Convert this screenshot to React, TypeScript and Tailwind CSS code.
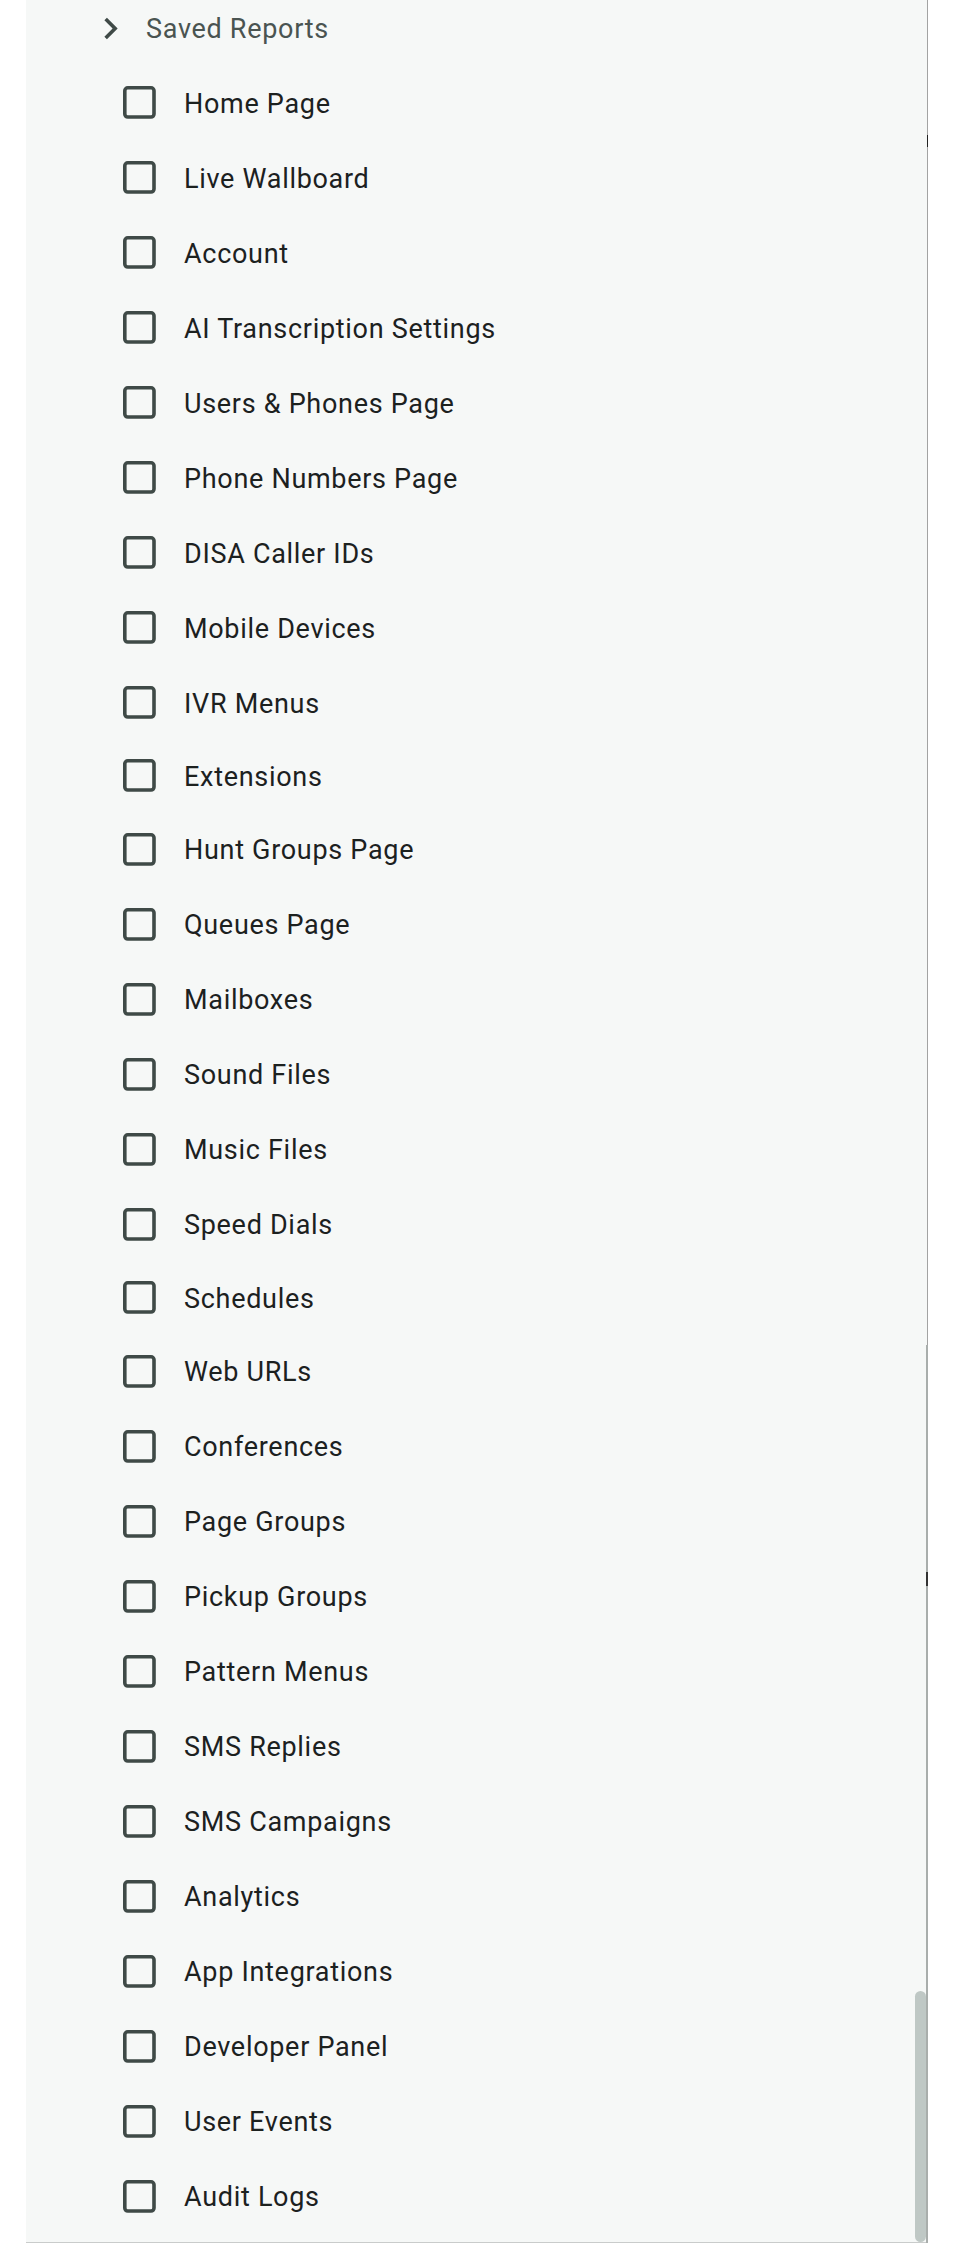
import React from "react";

const items: { label: string; h?: string }[] = [
  { label: "Home Page" },
  { label: "Live Wallboard" },
  { label: "Account" },
  { label: "AI Transcription Settings" },
  { label: "Users & Phones Page" },
  { label: "Phone Numbers Page" },
  { label: "DISA Caller IDs" },
  { label: "Mobile Devices" },
  { label: "IVR Menus" },
  { label: "Extensions", h: "short1" },
  { label: "Hunt Groups Page" },
  { label: "Queues Page" },
  { label: "Mailboxes" },
  { label: "Sound Files" },
  { label: "Music Files" },
  { label: "Speed Dials" },
  { label: "Schedules", h: "short2" },
  { label: "Web URLs" },
  { label: "Conferences" },
  { label: "Page Groups" },
  { label: "Pickup Groups" },
  { label: "Pattern Menus" },
  { label: "SMS Replies" },
  { label: "SMS Campaigns" },
  { label: "Analytics" },
  { label: "App Integrations" },
  { label: "Developer Panel" },
  { label: "User Events" },
  { label: "Audit Logs" },
];

function CheckboxIcon() {
  return (
    <svg width="33" height="33" viewBox="0 0 33 33" className="shrink-0">
      <rect
        x="1.8"
        y="1.8"
        width="29.2"
        height="29.2"
        rx="3"
        fill="none"
        stroke="#3f4a47"
        strokeWidth="3.6"
      />
    </svg>
  );
}

function Chevron() {
  return (
    <svg width="43" height="43" viewBox="0 0 24 24" className="shrink-0">
      <path d="M10 6L8.59 7.41 13.17 12l-4.58 4.59L10 18l6-6z" fill="#3f4a47" />
    </svg>
  );
}

export default function App() {
  return (
    <div
      className="w-[968px] h-[2245px] bg-white relative overflow-hidden"
      style={{ fontFamily: "Roboto, 'Noto Sans', sans-serif" }}
    >
      <div className="ml-[26px] w-[902px] h-[2243px] bg-[#f6f8f7] border-r border-b border-r-[#a3a3a3] border-b-[#c9cccb] flex flex-col">
        <div className="h-[56px] flex items-center pl-[62.5px] shrink-0">
          <Chevron />
          <span className="ml-[14.5px] mt-[2px] text-[27px] leading-none tracking-[0.7px] text-[#4a5451]">
            Saved Reports
          </span>
        </div>
        <div className="pt-[9px] flex flex-col">
          {items.map((it) => (
            <div
              key={it.label}
              className={
                "flex items-center pl-[97px] shrink-0 " +
                (it.h === "short1" ? "h-[71.5px]" : it.h === "short2" ? "h-[72px]" : "h-[75px]")
              }
            >
              <CheckboxIcon />
              <span className="ml-[28px] mt-[3px] text-[27px] leading-none tracking-[0.7px] text-[#1c211f] whitespace-nowrap">
                {it.label}
              </span>
            </div>
          ))}
        </div>
      </div>
      {/* scrollbar track edge and thumb */}
      <div className="absolute left-[926px] top-[1345px] w-[2px] h-[898px] bg-[#a9aeac]" />
      <div className="absolute left-[915px] top-[1991px] w-[11px] h-[251px] rounded-full bg-[#bfc8c5]" />
      {/* small marks at right edge */}
      <div className="absolute left-[927px] top-[135px] w-[1px] h-[12px] bg-[#222]" />
      <div className="absolute left-[926px] top-[1572px] w-[2px] h-[14px] bg-[#333]" />
    </div>
  );
}
